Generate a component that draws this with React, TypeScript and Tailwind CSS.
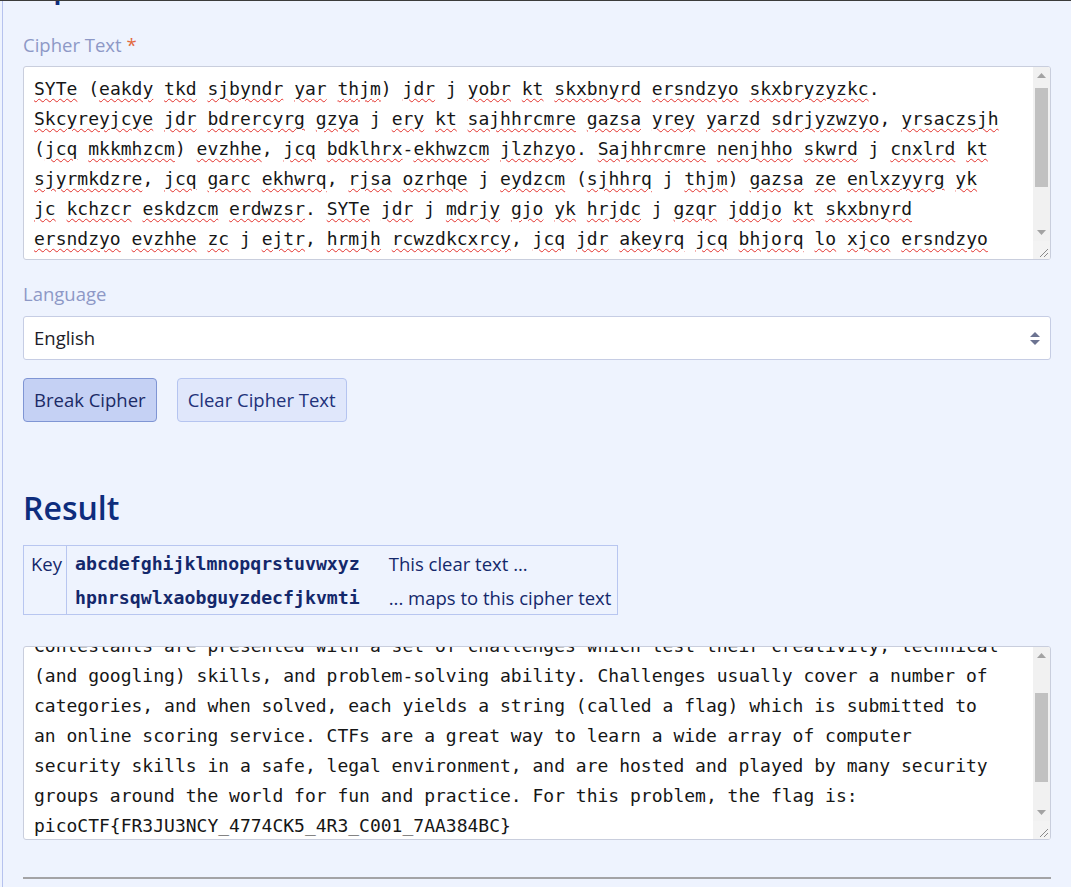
import React, { useEffect, useRef } from 'react';

const sans = "font-['Open_Sans','Noto_Sans',sans-serif]";
const mono = "font-['DejaVu_Sans_Mono','Liberation_Mono',monospace]";

const cipherLines = [
  'SYTe (eakdy tkd sjbyndr yar thjm) jdr j yobr kt skxbnyrd ersndzyo skxbryzyzkc.',
  'Skcyreyjcye jdr bdrercyrg gzya j ery kt sajhhrcmre gazsa yrey yarzd sdrjyzwzyo, yrsaczsjh',
  '(jcq mkkmhzcm) evzhhe, jcq bdklhrx-ekhwzcm jlzhzyo. Sajhhrcmre nenjhho skwrd j cnxlrd kt',
  'sjyrmkdzre, jcq garc ekhwrq, rjsa ozrhqe j eydzcm (sjhhrq j thjm) gazsa ze enlxzyyrg yk',
  'jc kchzcr eskdzcm erdwzsr. SYTe jdr j mdrjy gjo yk hrjdc j gzqr jddjo kt skxbnyrd',
  'ersndzyo evzhhe zc j ejtr, hrmjh rcwzdkcxrcy, jcq jdr akeyrq jcq bhjorq lo xjco ersndzyo',
  'mdknbe jdkncq yar gkdhq tkd tnc jcq bdjsyzsr. Tkd yaze bdklhrx, yar thjm ze:',
  'bzskSYT{TD3FN3CSO_4774SV5_4D3_S001_7JJ384LS}',
];

const plainLines = [
  'CTFs (short for capture the flag) are a type of computer security competition.',
  'Contestants are presented with a set of challenges which test their creativity, technical',
  '(and googling) skills, and problem-solving ability. Challenges usually cover a number of',
  'categories, and when solved, each yields a string (called a flag) which is submitted to',
  'an online scoring service. CTFs are a great way to learn a wide array of computer',
  'security skills in a safe, legal environment, and are hosted and played by many security',
  'groups around the world for fun and practice. For this problem, the flag is:',
  'picoCTF{FR3JU3NCY_4774CK5_4R3_C001_7AA384BC}',
  '',
  '',
];

// words the browser's spell checker flags get a red squiggle
function Squiggly({ line }: { line: string }) {
  const parts = line.split(/([A-Za-z]{2,})/);
  return (
    <>
      {parts.map((p, i) =>
        i % 2 === 1 ? (
          <span
            key={i}
            className="underline decoration-wavy decoration-[#e3312b] decoration-1 underline-offset-[3px]"
          >
            {p}
          </span>
        ) : (
          <span key={i}>{p}</span>
        )
      )}
    </>
  );
}

// the classic grey scrollbar + resize grip drawn beside the text
function FakeScrollbar({ thumbTop, thumbHeight }: { thumbTop: number; thumbHeight: number }) {
  return (
    <div className="w-[17px] shrink-0 flex flex-col bg-[#f1f1f1]">
      <div className="h-[17px] flex items-center justify-center">
        <svg width="9" height="5" viewBox="0 0 9 5">
          <polygon points="0,5 4.5,0 9,5" fill="#a3a3a3" />
        </svg>
      </div>
      <div className="flex-1 flex flex-col px-[2px]">
        <div style={{ height: thumbTop }} />
        <div className="bg-[#c1c1c1]" style={{ height: thumbHeight }} />
      </div>
      <div className="h-[17px] flex items-center justify-center">
        <svg width="9" height="5" viewBox="0 0 9 5">
          <polygon points="0,0 9,0 4.5,5" fill="#a3a3a3" />
        </svg>
      </div>
      <div className="h-[18px] bg-[#f3f3f3] flex items-end justify-end pr-[2px] pb-[2px]">
        <svg width="10" height="10" viewBox="0 0 10 10">
          <line x1="2" y1="10" x2="10" y2="2" stroke="#8a8a8a" strokeWidth="1" />
          <line x1="6" y1="10" x2="10" y2="6" stroke="#8a8a8a" strokeWidth="1" />
        </svg>
      </div>
    </div>
  );
}

function TextBox({
  lines,
  squiggle,
  scrollTo,
  thumbTop,
  thumbHeight,
}: {
  lines: string[];
  squiggle?: boolean;
  scrollTo?: number;
  thumbTop: number;
  thumbHeight: number;
}) {
  const ref = useRef<HTMLDivElement>(null);
  useEffect(() => {
    if (ref.current && scrollTo) ref.current.scrollTop = scrollTo;
  }, [scrollTo]);

  return (
    <div className="h-[194px] flex bg-white border border-[#c9cedd] rounded-[3px] overflow-hidden">
      <div
        ref={ref}
        className={`flex-1 overflow-hidden pl-[10px] pt-[7px] pb-[7px] text-[18px] leading-[30px] text-[#161616] ${mono}`}
      >
        {lines.map((l, i) => (
          <div key={i} className="whitespace-pre h-[30px]">
            {squiggle ? <Squiggly line={l} /> : l}
          </div>
        ))}
      </div>
      <FakeScrollbar thumbTop={thumbTop} thumbHeight={thumbHeight} />
    </div>
  );
}

function SelectArrows() {
  return (
    <svg width="10" height="13" viewBox="0 0 10 13" className="shrink-0">
      <polygon points="0,5 5,0 10,5" fill="#6c7391" />
      <polygon points="0,8 10,8 5,13" fill="#6c7391" />
    </svg>
  );
}

export default function App() {
  return (
    <div className={`min-h-[887px] bg-[#eef3fe] ${sans}`}>
      <div className="h-[1px] bg-[#3b3b3b]" />
      <div className="ml-[2px] border-l border-[#b6c2ee] pl-[20px] pr-[20px] pb-[8px]">
        {/* bottom of the heading above, scrolled out of view */}
        <div className="h-[4px] overflow-hidden flex items-end">
          <h2 className="text-[32px] leading-[38px] font-semibold text-[#0e2d7d] shrink-0">Input</h2>
        </div>

        <label className="block mt-[26px] mb-[8px] text-[18.5px] leading-[27px] text-[#8d98c6]">
          Cipher Text <span className="text-[#e2693f]">*</span>
        </label>
        <TextBox lines={cipherLines} squiggle thumbTop={4} thumbHeight={99} />

        <label className="block mt-[20px] mb-[9px] text-[18.5px] leading-[27px] text-[#8d98c6]">Language</label>
        <div className="h-[44px] flex items-center justify-between bg-white border border-[#c6cde4] rounded-[3px] pl-[10px] pr-[10px]">
          <span className="text-[18.5px] text-[#1c1c28]">English</span>
          <SelectArrows />
        </div>

        <div className="flex gap-[20px] mt-[18px]">
          <button className="h-[44px] px-[10px] rounded-[4px] bg-[#c5d1f4] border border-[#7f95d4] text-[18.5px] text-[#1b2a66]">
            Break Cipher
          </button>
          <button className="h-[44px] px-[10px] rounded-[4px] bg-[#e0e7fb] border border-[#b5c4f0] text-[18.5px] text-[#22327a]">
            Clear Cipher Text
          </button>
        </div>

        <h2 className="mt-[67px] text-[32px] leading-[38px] font-semibold text-[#0e2d7d]">Result</h2>

        <div className="mt-[18px] inline-grid grid-cols-[auto_auto_auto] border border-[#b8c6f0] text-[#14286b] text-[18.5px]">
          <div className="row-span-2 border-r border-[#b8c6f0] pl-[7px] pr-[4px] h-full leading-[35px]">Key</div>
          <div className={`pl-[8px] pr-[21px] text-[18.2px] leading-[35px] font-semibold ${mono}`}>
            abcdefghijklmnopqrstuvwxyz
          </div>
          <div className="pl-[8px] pr-[6px] leading-[35px]">This clear text ...</div>
          <div className={`pl-[8px] pr-[21px] text-[18.2px] leading-[33px] font-bold ${mono}`}>
            hpnrsqwlxaobguyzdecfjkvmti
          </div>
          <div className="pl-[8px] pr-[6px] leading-[33px]">... maps to this cipher text</div>
        </div>

        <div className="mt-[31px]">
          <TextBox lines={plainLines} scrollTo={53} thumbTop={29} thumbHeight={89} />
        </div>

        <div className="mt-[37px] h-[2px] bg-[#a3a3a6]" />
      </div>
    </div>
  );
}
